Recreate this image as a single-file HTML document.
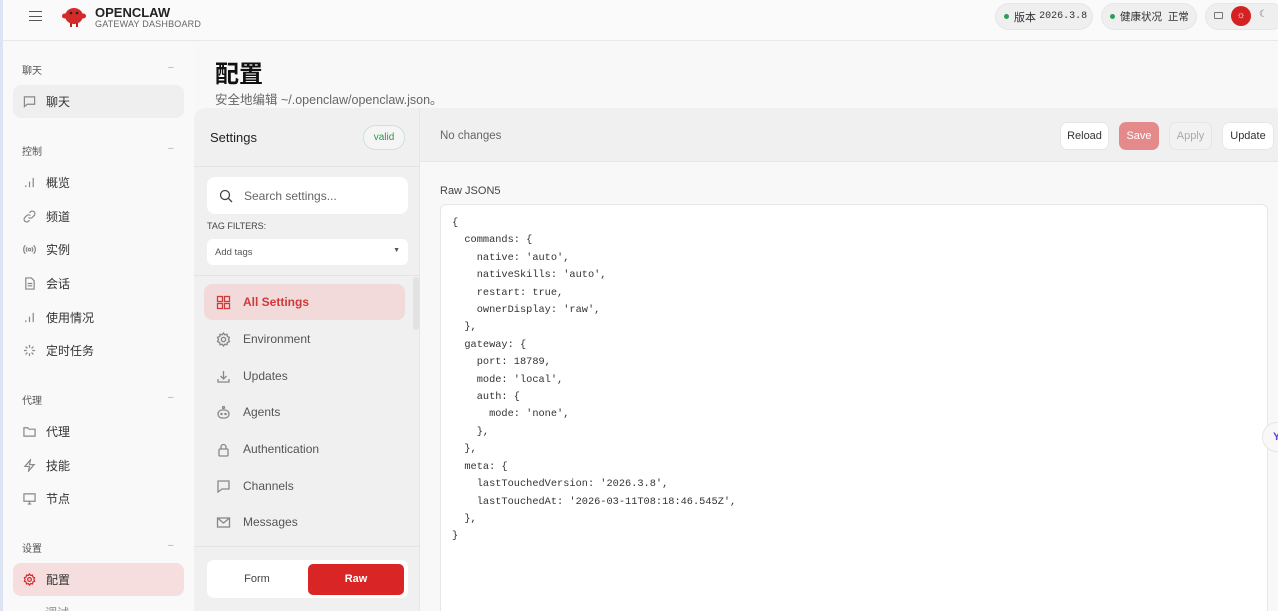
<!DOCTYPE html>
<html><head><meta charset="utf-8"><style>
*{box-sizing:border-box;margin:0;padding:0}
html,body{width:1278px;height:611px;overflow:hidden}
body{background:#f8f8f8;font-family:"Liberation Sans","Noto Sans CJK SC",sans-serif;color:#333;position:relative}
.a{position:absolute;white-space:nowrap}
.hdr{left:0;top:0;width:1278px;height:41px;background:#fafafa;border-bottom:1px solid #e8e8e8}
.lstrip{left:0;top:0;width:3px;height:611px;background:#dce3f3}
.side{left:3px;top:41px;width:191px;height:570px;background:#f9f9f9}
.sec{font-size:10px;color:#555;left:22px}
.dash{left:168px;font-size:10px;color:#aaa}
.item{left:13px;width:171px;height:33px;border-radius:8px;font-size:12px;color:#333;display:flex;align-items:center;padding-left:10px}
.item svg{width:13px;height:13px;margin-right:10px;stroke:#888;fill:none;stroke-width:1.3}
.pill{top:3px;height:27px;border-radius:14px;background:#efefef;border:1px solid #e6e6e6;font-size:11px;display:flex;align-items:center;padding:0 10px;color:#333}
.dot{width:5px;height:5px;border-radius:50%;background:#2aa052;margin-right:5px;flex:none}
.mono{font-family:"Liberation Mono","DejaVu Sans Mono",monospace}
.nav{left:204px;width:201px;height:36px;border-radius:8px;display:flex;align-items:center;padding-left:12px;font-size:12px;color:#555}
.nav svg{width:15px;height:15px;margin-right:12px;stroke:#888;fill:none;stroke-width:1.3}
.btn{top:122px;height:28px;border-radius:7px;font-size:11px;display:flex;align-items:center;justify-content:center;background:#fff;border:1px solid #e6e6e6;color:#333}
pre{font-family:"Liberation Mono","DejaVu Sans Mono",monospace;font-size:10.3px;line-height:17.4px;color:#333}
</style></head><body>
<div class="a hdr"></div>
<div class="a lstrip"></div>
<div class="a" style="left:29px;top:11px;width:13px;height:10px;border-top:1.3px solid #555;border-bottom:1.3px solid #555"></div>
<div class="a" style="left:29px;top:15.5px;width:13px;height:1.3px;background:#555"></div>
<svg class="a" style="left:61px;top:4px" width="26" height="24" viewBox="0 0 26 24"><ellipse cx="13" cy="12" rx="9" ry="8" fill="#d42a2a"/><circle cx="3.5" cy="12" r="2.5" fill="#d42a2a"/><circle cx="22.5" cy="12" r="2.5" fill="#d42a2a"/><rect x="9" y="19" width="2" height="4" fill="#b22"/><rect x="15" y="19" width="2" height="4" fill="#b22"/><circle cx="10" cy="9" r="1.3" fill="#222"/><circle cx="16" cy="9" r="1.3" fill="#222"/></svg>
<div class="a" style="left:95px;top:5px;font-size:13px;font-weight:bold;color:#222">OPENCLAW</div>
<div class="a" style="left:95px;top:19px;font-size:9px;color:#666;letter-spacing:.2px">GATEWAY DASHBOARD</div>
<div class="a pill" style="left:995px;width:98px;padding:0 8px"><span class="dot"></span>版本&nbsp;<span class="mono" style="font-size:10px">2026.3.8</span></div>
<div class="a pill" style="left:1101px;width:96px;padding:0 8px;font-size:10.5px"><span class="dot"></span>健康状况&nbsp;&nbsp;正常</div>
<div class="a pill" style="left:1205px;width:80px;padding:0"></div>
<div class="a" style="left:1214px;top:12px;width:9px;height:7px;border:1px solid #777;border-radius:1px"></div>
<div class="a" style="left:1231px;top:6px;width:20px;height:20px;border-radius:50%;background:#d42222;color:#fff;font-size:10px;text-align:center;line-height:20px">☼</div>
<div class="a" style="left:1259px;top:9px;font-size:10px;color:#777">☾</div>

<div class="a side"></div>
<div class="a sec" style="top:62px">聊天</div><div class="a dash" style="top:62px">–</div>
<div class="a item" style="top:85px;background:#efefef"><svg viewBox="0 0 14 14"><path d="M1.5 2h11v8h-8l-3 2.5z"/></svg>聊天</div>
<div class="a sec" style="top:143px">控制</div><div class="a dash" style="top:143px">–</div>
<div class="a item" style="top:166px"><svg viewBox="0 0 14 14"><path d="M3 12v-2M7 12V6M11 12V2"/></svg>概览</div>
<div class="a item" style="top:200px"><svg viewBox="0 0 14 14"><path d="M6 8a3 3 0 0 0 4 0l2-2a2.5 2.5 0 0 0-4-4l-1 1M8 6a3 3 0 0 0-4 0l-2 2a2.5 2.5 0 0 0 4 4l1-1"/></svg>频道</div>
<div class="a item" style="top:233px"><svg viewBox="0 0 14 14"><circle cx="7" cy="7" r="1.3"/><path d="M4.5 4.5a3.5 3.5 0 0 0 0 5M9.5 4.5a3.5 3.5 0 0 1 0 5M2.5 2.5a6.5 6.5 0 0 0 0 9M11.5 2.5a6.5 6.5 0 0 1 0 9"/></svg>实例</div>
<div class="a item" style="top:267px"><svg viewBox="0 0 14 14"><path d="M3 1h6l3 3v9H3zM5 7h5M5 9.5h5"/></svg>会话</div>
<div class="a item" style="top:301px"><svg viewBox="0 0 14 14"><path d="M3 12v-2M7 12V6M11 12V2"/></svg>使用情况</div>
<div class="a item" style="top:334px"><svg viewBox="0 0 14 14"><path d="M7 1v3M7 10v3M1 7h3M10 7h3M2.8 2.8l2 2M9.2 9.2l2 2M2.8 11.2l2-2M9.2 4.8l2-2"/></svg>定时任务</div>
<div class="a sec" style="top:392px">代理</div><div class="a dash" style="top:392px">–</div>
<div class="a item" style="top:415px"><svg viewBox="0 0 14 14"><path d="M1 3h4l1.5 1.5H13V12H1z"/></svg>代理</div>
<div class="a item" style="top:449px"><svg viewBox="0 0 14 14"><path d="M8 1L2 8h5l-1 5 6-7H7z"/></svg>技能</div>
<div class="a item" style="top:482px"><svg viewBox="0 0 14 14"><path d="M1 2h12v8H1zM5 13h4M7 10v3"/></svg>节点</div>
<div class="a sec" style="top:540px">设置</div><div class="a dash" style="top:540px">–</div>
<div class="a item" style="top:563px;background:#f6dede;color:#333"><svg viewBox="0 0 14 14" style="stroke:#d42a2a"><circle cx="7" cy="7" r="2"/><path d="M7 1l1.2 1.6 2-.4.4 2L12.5 5l-.8 2 .8 2-1.9.8-.4 2-2-.4L7 13l-1.2-1.6-2 .4-.4-2L1.5 9l.8-2-.8-2 1.9-.8.4-2 2 .4z"/></svg>配置</div>
<div class="a" style="left:45px;top:604px;font-size:12px;color:#888">调试</div>

<div class="a" style="left:215px;top:54px;font-size:24px;font-weight:bold;color:#111">配置</div>
<div class="a" style="left:215px;top:89px;font-size:12.5px;color:#666">安全地编辑 ~/.openclaw/openclaw.json。</div>

<div class="a" style="left:194px;top:108px;width:226px;height:503px;background:#f0f0f0;border-radius:12px 0 0 0;border-right:1px solid #e6e6e6"></div>
<div class="a" style="left:194px;top:166px;width:226px;height:1px;background:#e4e4e4"></div>
<div class="a" style="left:210px;top:130px;font-size:13px;color:#222">Settings</div>
<div class="a" style="left:363px;top:125px;width:42px;height:25px;border-radius:13px;border:1px solid #cfe3d3;background:#f5f5f5;color:#2a9a4a;font-size:10px;text-align:center;line-height:23px">valid</div>
<div class="a" style="left:207px;top:177px;width:201px;height:37px;background:#fff;border-radius:8px;display:flex;align-items:center;padding-left:12px;font-size:12px;color:#666"><svg width="14" height="14" viewBox="0 0 14 14" style="margin-right:11px"><circle cx="6" cy="6" r="4.5" stroke="#444" stroke-width="1.3" fill="none"/><path d="M9.5 9.5L13 13" stroke="#444" stroke-width="1.3"/></svg>Search settings...</div>
<div class="a" style="left:207px;top:221px;font-size:9px;color:#444">TAG FILTERS:</div>
<div class="a" style="left:207px;top:239px;width:201px;height:26px;background:#fff;border-radius:6px;font-size:9.5px;color:#555;padding:8px 8px">Add tags<span style="float:right;font-size:7px">▼</span></div>
<div class="a" style="left:194px;top:275px;width:226px;height:1px;background:#e4e4e4"></div>
<div class="a" style="left:413px;top:277px;width:6px;height:53px;border-radius:3px;background:#e2e2e2"></div>
<div class="a nav" style="top:284px;background:#f3dada;color:#d03a3a;font-weight:bold"><svg viewBox="0 0 15 15" style="stroke:#d03a3a"><rect x="1.5" y="1.5" width="5" height="5"/><rect x="8.5" y="1.5" width="5" height="5"/><rect x="1.5" y="8.5" width="5" height="5"/><rect x="8.5" y="8.5" width="5" height="5"/></svg>All Settings</div>
<div class="a nav" style="top:321px"><svg viewBox="0 0 14 14"><circle cx="7" cy="7" r="2"/><path d="M7 1l1.2 1.6 2-.4.4 2L12.5 5l-.8 2 .8 2-1.9.8-.4 2-2-.4L7 13l-1.2-1.6-2 .4-.4-2L1.5 9l.8-2-.8-2 1.9-.8.4-2 2 .4z"/></svg>Environment</div>
<div class="a nav" style="top:358px"><svg viewBox="0 0 15 15"><path d="M7.5 2v8M4.5 7l3 3 3-3M2 10v3h11v-3"/></svg>Updates</div>
<div class="a nav" style="top:394px"><svg viewBox="0 0 15 15"><rect x="2" y="5" width="11" height="8" rx="4"/><circle cx="7.5" cy="2.5" r="1"/><circle cx="5.5" cy="9" r=".6"/><circle cx="9.5" cy="9" r=".6"/></svg>Agents</div>
<div class="a nav" style="top:431px"><svg viewBox="0 0 15 15"><rect x="3" y="7" width="9" height="7" rx="1"/><path d="M5 7V5a2.5 2.5 0 0 1 5 0v2"/></svg>Authentication</div>
<div class="a nav" style="top:468px"><svg viewBox="0 0 15 15"><path d="M2 2h11v8H6l-4 3z"/></svg>Channels</div>
<div class="a nav" style="top:504px"><svg viewBox="0 0 15 15"><rect x="1.5" y="3" width="12" height="9"/><path d="M1.5 3l6 5 6-5"/></svg>Messages</div>
<div class="a" style="left:194px;top:546px;width:226px;height:1px;background:#e4e4e4"></div>
<div class="a" style="left:207px;top:560px;width:201px;height:38px;background:#fff;border-radius:7px"></div>
<div class="a" style="left:207px;top:560px;width:100px;height:38px;font-size:11px;color:#444;text-align:center;line-height:38px">Form</div>
<div class="a" style="left:308px;top:564px;width:96px;height:31px;background:#d92525;border-radius:5px;font-size:11px;color:#fff;font-weight:bold;text-align:center;line-height:31px">Raw</div>

<div class="a" style="left:420px;top:108px;width:858px;height:54px;background:#f0f0f0;border-bottom:1px solid #e6e6e6"></div>
<div class="a" style="left:440px;top:130px;font-size:11.5px;color:#666">No changes</div>
<div class="a btn" style="left:1060px;width:49px">Reload</div>
<div class="a btn" style="left:1119px;width:40px;background:#e48a8a;border-color:#e48a8a;color:#fff">Save</div>
<div class="a btn" style="left:1169px;width:43px;background:#f2f2f2;color:#aaa">Apply</div>
<div class="a btn" style="left:1222px;width:52px">Update</div>

<div class="a" style="left:440px;top:185px;font-size:11px;color:#444">Raw JSON5</div>
<div class="a" style="left:440px;top:204px;width:828px;height:407px;background:#fff;border:1px solid #e6e6e6;border-bottom:none;border-radius:6px 6px 0 0;padding:10px 11px">
<pre>{
  commands: {
    native: 'auto',
    nativeSkills: 'auto',
    restart: true,
    ownerDisplay: 'raw',
  },
  gateway: {
    port: 18789,
    mode: 'local',
    auth: {
      mode: 'none',
    },
  },
  meta: {
    lastTouchedVersion: '2026.3.8',
    lastTouchedAt: '2026-03-11T08:18:46.545Z',
  },
}</pre></div>
<div class="a" style="left:1262px;top:422px;width:30px;height:30px;border-radius:50%;background:#f8f8f8;border:1px solid #e6e6e6;color:#6a3fd8;font-size:11px;font-weight:bold;padding:8px 0 0 10px">Y</div>
</body></html>
